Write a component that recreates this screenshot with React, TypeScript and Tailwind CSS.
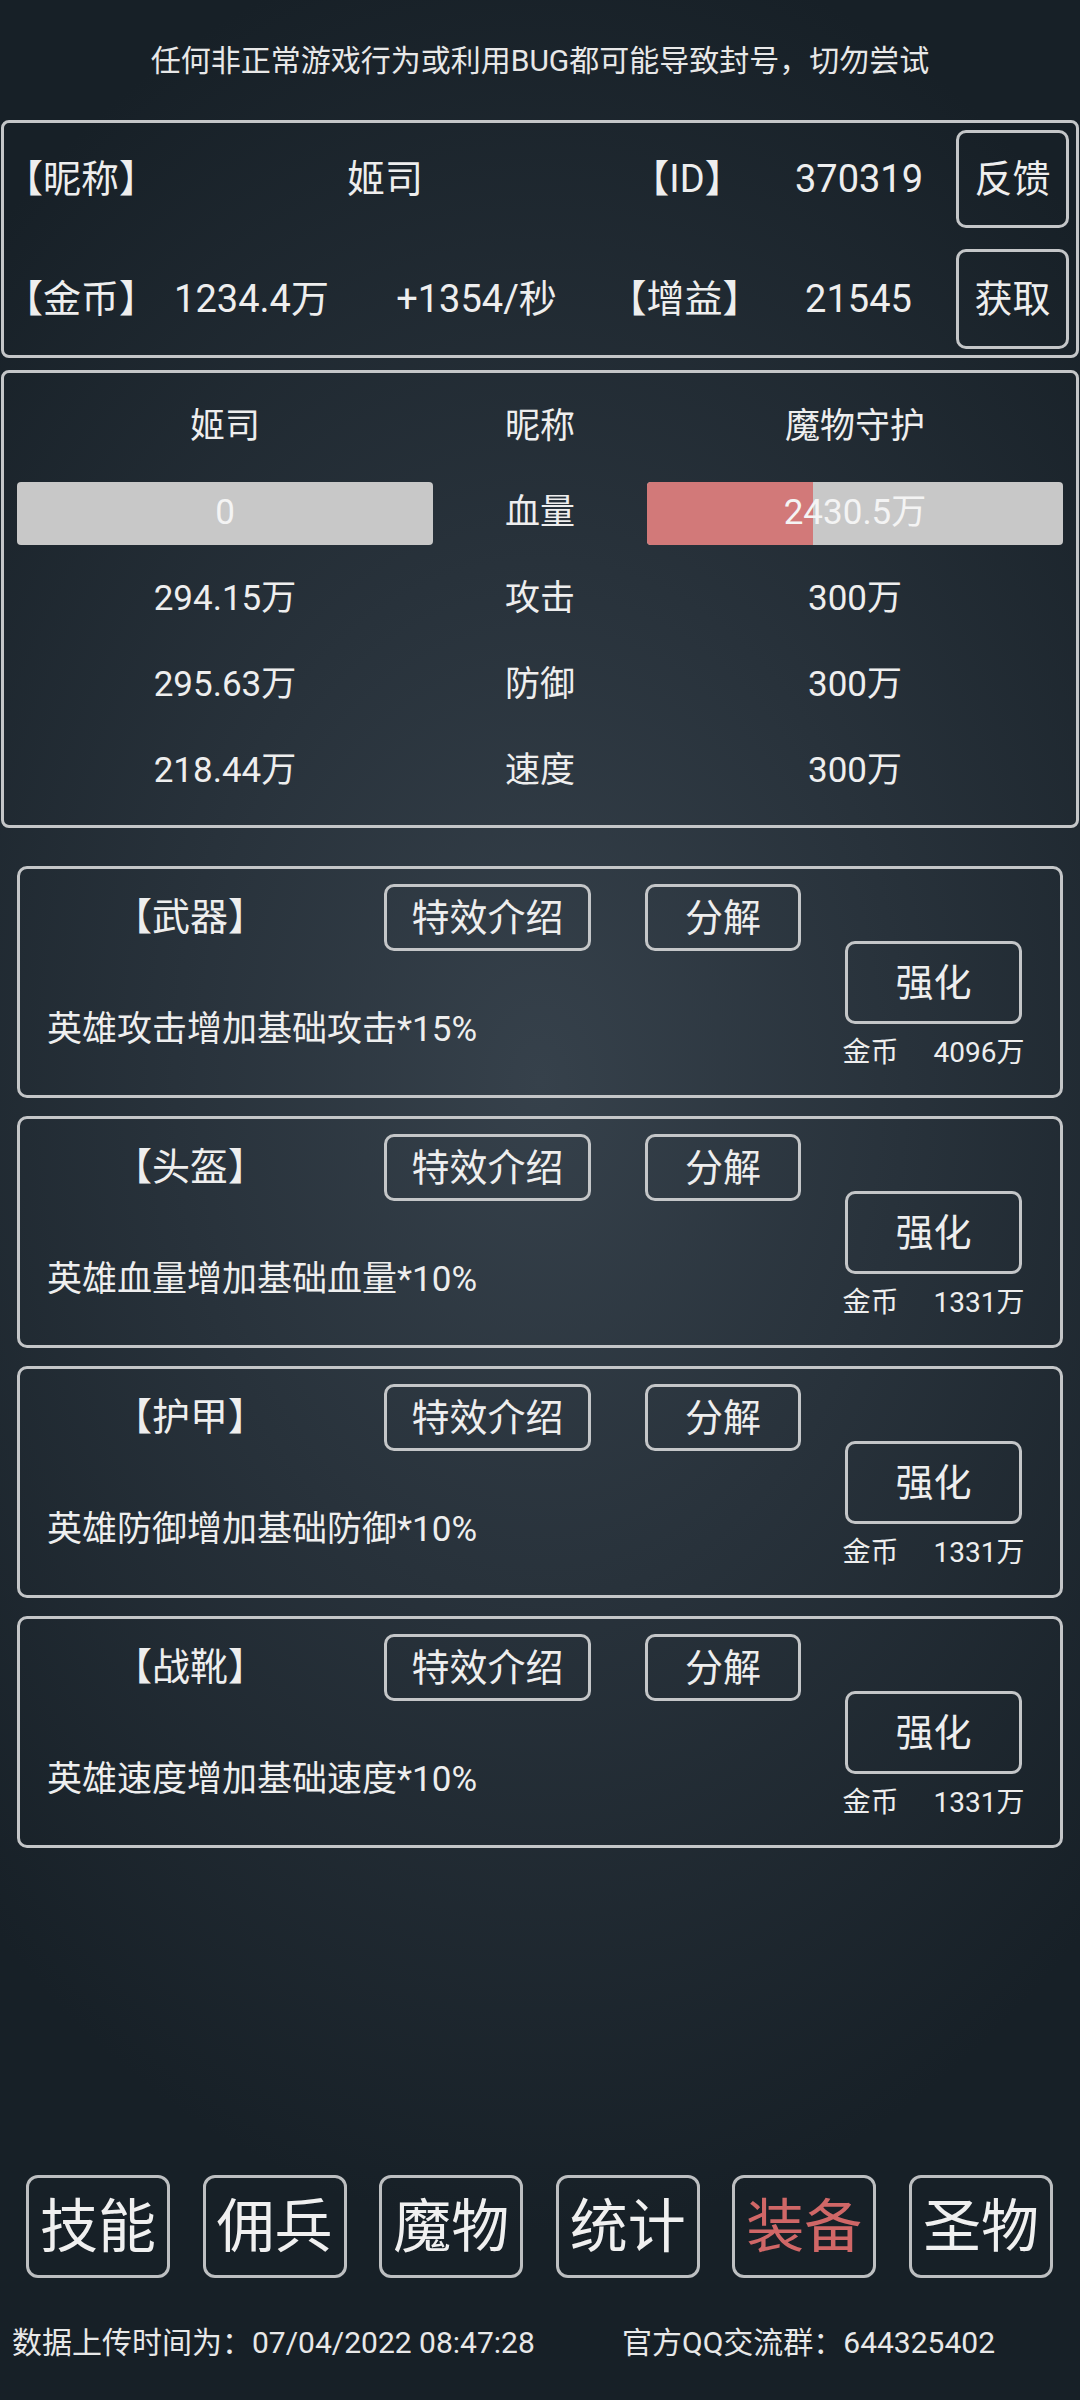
import React from "react";

const FONT = "font-['Roboto','Noto_Sans_CJK_SC',sans-serif]";

function Btn({ children, className }: { children: React.ReactNode; className: string }) {
  return (
    <div
      className={`flex items-center justify-center rounded-[10px] border-[3px] border-[#c4c6c8] text-[38px] leading-none text-[#eeeeee] ${className}`}
    >
      {children}
    </div>
  );
}

function Cell({ w, children, className = "" }: { w: string; children: React.ReactNode; className?: string }) {
  return (
    <div className={`flex shrink-0 items-center justify-center whitespace-nowrap ${w} ${className}`}>{children}</div>
  );
}

function StatRow({ left, mid, right }: { left: React.ReactNode; mid: string; right: React.ReactNode }) {
  return (
    <div className="flex h-[86px] items-center pl-[13px]">
      <div className="flex w-[416px] items-center justify-center">{left}</div>
      <div className="flex w-[214px] items-center justify-center">{mid}</div>
      <div className="flex w-[416px] items-center justify-center">{right}</div>
    </div>
  );
}

function Bar({ value, pct }: { value: string; pct: number }) {
  return (
    <div className="relative flex h-[63px] w-[416px] items-center justify-center overflow-hidden rounded-[4px] bg-[#c8c8c8]">
      <div className="absolute left-0 top-0 h-full bg-[#d27979]" style={{ width: `${pct}%` }} />
      <span className="relative text-[35px] text-[#f4f4f4]">{value}</span>
    </div>
  );
}

function EquipCard({ name, desc, cost }: { name: string; desc: string; cost: string }) {
  return (
    <div className="flex h-[232px] w-[1046px] rounded-[10px] border-[3px] border-[#c4c6c8]">
      <div className="flex flex-col pt-[15px]">
        <div className="flex h-[67px] items-center">
          <div className="flex w-[340px] items-center justify-center text-[38px]">{name}</div>
          <Btn className="ml-[24px] h-[67px] w-[207px]">特效介绍</Btn>
          <Btn className="ml-[54px] h-[67px] w-[156px]">分解</Btn>
        </div>
        <div className="mt-[55px] pl-[27px] text-[35px] leading-[48px]">{desc}</div>
      </div>
      <div className="ml-[44px] flex w-[177px] flex-col items-center pt-[72px]">
        <Btn className="h-[83px] w-[177px]">强化</Btn>
        <div className="mt-[11px] flex items-center whitespace-nowrap text-[28px] leading-[36px]">
          <span>金币</span>
          <span className="ml-[35px]">{cost}</span>
        </div>
      </div>
    </div>
  );
}

export default function App() {
  const navs = ["技能", "佣兵", "魔物", "统计", "装备", "圣物"];
  return (
    <div
      className={`${FONT} flex h-[2400px] w-[1080px] flex-col overflow-hidden text-[#eeeeee] bg-[radial-gradient(ellipse_75%_48%_at_50%_45%,#36414b_0%,#28323b_45%,#172027_100%)]`}
    >
      {/* Warning */}
      <div className="flex h-[120px] items-center justify-center text-[30px] text-[#e8e8e8]">
        任何非正常游戏行为或利用BUG都可能导致封号，切勿尝试
      </div>

      {/* Info panel */}
      <div className="mx-[1px] flex flex-col gap-[21px] rounded-[8px] border-[3px] border-[#c4c6c8] pb-[6px] pt-[7px] text-[38px]">
        <div className="flex h-[98px] items-center">
          <Cell w="w-[154px]">【昵称】</Cell>
          <Cell w="w-[454px]">姬司</Cell>
          <Cell w="w-[150px]">【ID】</Cell>
          <Cell w="w-[194px]">370319</Cell>
          <Btn className="h-[98px] w-[113px]">反馈</Btn>
        </div>
        <div className="flex h-[100px] items-center">
          <Cell w="w-[154px]">【金币】</Cell>
          <Cell w="w-[187px]">1234.4万</Cell>
          <Cell w="w-[263px]">+1354/秒</Cell>
          <Cell w="w-[153px]">【增益】</Cell>
          <Cell w="w-[195px]">21545</Cell>
          <Btn className="h-[100px] w-[113px]">获取</Btn>
        </div>
      </div>

      {/* Stats panel */}
      <div className="mx-[1px] mt-[12px] flex flex-col rounded-[8px] border-[3px] border-[#c4c6c8] py-[11px] text-[35px]">
        <StatRow left="姬司" mid="昵称" right="魔物守护" />
        <StatRow left={<Bar value="0" pct={0} />} mid="血量" right={<Bar value="2430.5万" pct={40} />} />
        <StatRow left="294.15万" mid="攻击" right="300万" />
        <StatRow left="295.63万" mid="防御" right="300万" />
        <StatRow left="218.44万" mid="速度" right="300万" />
      </div>

      {/* Equipment */}
      <div className="mt-[38px] flex flex-col gap-[18px] pl-[17px]">
        <EquipCard name="【武器】" desc="英雄攻击增加基础攻击*15%" cost="4096万" />
        <EquipCard name="【头盔】" desc="英雄血量增加基础血量*10%" cost="1331万" />
        <EquipCard name="【护甲】" desc="英雄防御增加基础防御*10%" cost="1331万" />
        <EquipCard name="【战靴】" desc="英雄速度增加基础速度*10%" cost="1331万" />
      </div>

      {/* Bottom nav */}
      <div className="mt-auto flex flex-col pb-[40px]">
        <div className="flex gap-[32.6px] pl-[26px]">
          {navs.map((n) => (
            <div
              key={n}
              className={`flex h-[103px] w-[144px] items-center justify-center rounded-[12px] border-[3px] border-[#bdbfc1] text-[58px] leading-none ${
                n === "装备" ? "text-[#d06767]" : "text-[#f0f0f0]"
              }`}
            >
              {n}
            </div>
          ))}
        </div>
        <div className="mt-[46px] flex h-[36px] items-center whitespace-nowrap text-[30px] text-[#e8e8e8]">
          <span className="ml-[12px] w-[610px]">数据上传时间为：07/04/2022 08:47:28</span>
          <span>官方QQ交流群：644325402</span>
        </div>
      </div>
    </div>
  );
}
